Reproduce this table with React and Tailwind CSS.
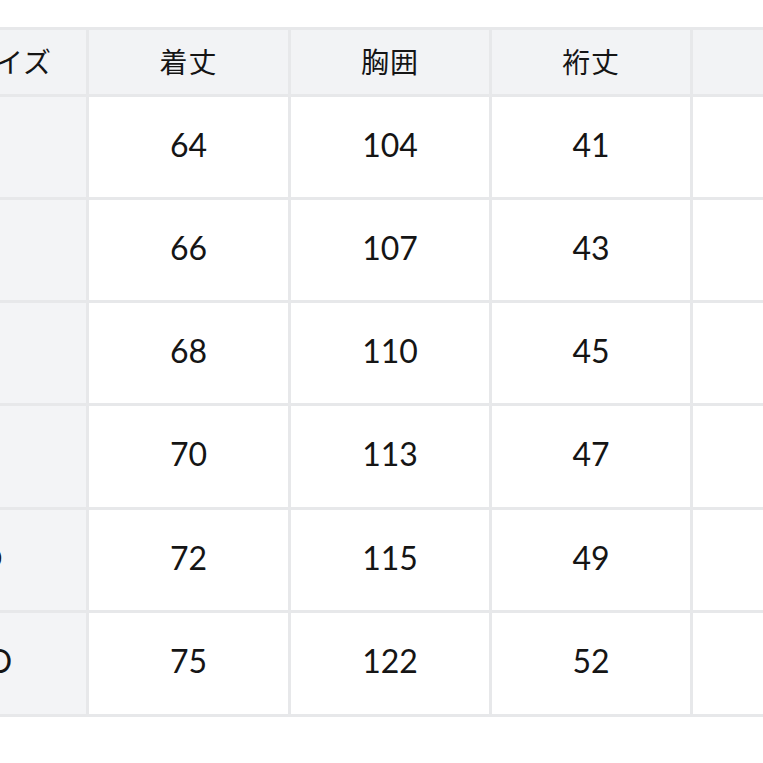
const headers = ["表記サイズ", "着丈", "胸囲", "裄丈", "袖口"];

// size rows: label + measurements (cm)
const rows = [
  ["S", "64", "104", "41", "20"],
  ["M", "66", "107", "43", "21"],
  ["L", "68", "110", "45", "22"],
  ["O", "70", "113", "47", "23"],
  ["XO", "72", "115", "49", "24"],
  ["2XO", "75", "122", "52", "25"],
];

export default function App() {
  return (
    <div className="w-[763px] h-[763px] overflow-hidden bg-white pt-[27px] font-['Lato','Noto_Sans_CJK_JP',sans-serif] text-[#151515]">
      <div className="ml-[-129px] inline-grid w-max grid-cols-[212px_199px_198px_198px_198px] gap-[3px] p-[3px] bg-[#e7e8ea]">
        {/* header row */}
        {headers.map((h) => (
          <div
            key={h}
            className="h-[64px] pb-[2px] flex items-center justify-center bg-[#f2f3f5] text-[28px] tracking-[1px] font-['Noto_Sans_CJK_JP',sans-serif]"
          >
            {h}
          </div>
        ))}

        {/* body rows */}
        {rows.map((row, i) =>
          row.map((cell, j) => (
            <div
              key={i + "-" + j}
              className={`${i === 3 || i === 5 ? "h-[101px]" : "h-[100px]"} pb-[5px] flex items-center justify-center text-[32px] ${
                j === 0 ? "bg-[#f3f4f6]" : "bg-white"
              }`}
            >
              {cell}
            </div>
          ))
        )}
      </div>
    </div>
  );
}
